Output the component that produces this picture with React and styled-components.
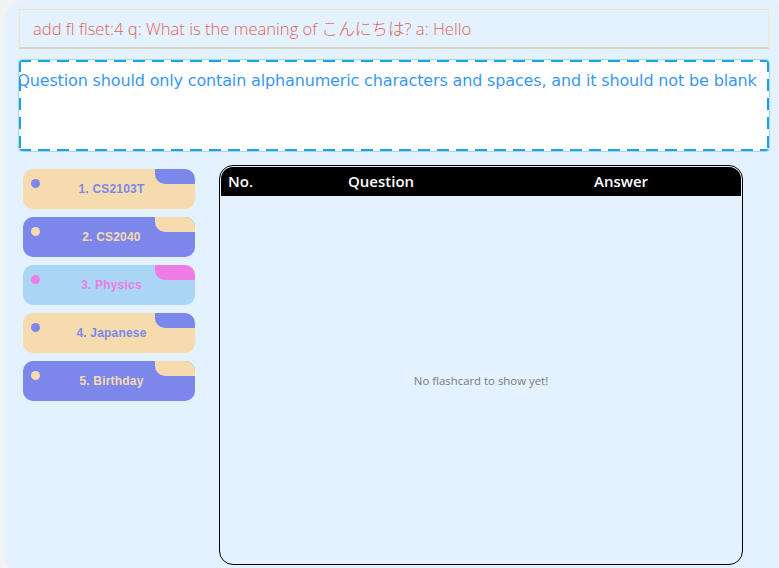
import React from 'react'
import styled, { createGlobalStyle } from 'styled-components'

const GlobalStyle = createGlobalStyle`
  html, body {
    margin: 0;
    padding: 0;
    background: #f2f2f2;
    overflow: hidden;
  }
`

const WHEAT = '#f6dbae'
const PURPLE = '#7c87ec'
const SKY = '#aad5f4'
const PINK = '#ee7be6'
const DASH = '#1ca4e0'

const sets = [
  { name: '1. CS2103T', bg: WHEAT, fg: PURPLE },
  { name: '2. CS2040', bg: PURPLE, fg: WHEAT },
  { name: '3. Physics', bg: SKY, fg: PINK },
  { name: '4. Japanese', bg: WHEAT, fg: PURPLE },
  { name: '5. Birthday', bg: PURPLE, fg: WHEAT },
]

const Page = styled.div`
  margin-left: 4px;
  width: 790px;
  height: 575px;
  box-sizing: border-box;
  background: #e4f1fe;
  border-radius: 22px;
  padding: 9px 0 0 15px;
`

const Inner = styled.div`
  width: 750px;
`

const CommandBox = styled.div`
  height: 40px;
  box-sizing: border-box;
  border: 1px solid #f7e3c4;
  border-bottom: 2px solid #d9d4cc;
  padding: 0 13px 2px;
  display: flex;
  align-items: center;
  font-family: 'Open Sans', 'Noto Sans CJK JP', sans-serif;
  font-size: 16.6px;
  font-weight: 300;
  color: #e0665a;
`

const ResultBox = styled.div`
  margin-top: 11px;
  height: 91px;
  box-sizing: border-box;
  border-radius: 3px;
  outline: 1px solid #a8d8ee;
  background-color: #fff;
  background-image:
    repeating-linear-gradient(90deg, ${DASH} 0 12px, transparent 12px 19px),
    repeating-linear-gradient(90deg, ${DASH} 0 12px, transparent 12px 19px),
    repeating-linear-gradient(180deg, ${DASH} 0 12px, transparent 12px 19px),
    repeating-linear-gradient(180deg, ${DASH} 0 12px, transparent 12px 19px);
  background-size: 100% 2px, 100% 2px, 2px 100%, 2px 100%;
  background-position: 0 0, 0 100%, 0 0, 100% 0;
  background-repeat: no-repeat;
  display: flex;
  justify-content: center;
  padding-top: 10px;
`

const ResultText = styled.div`
  white-space: nowrap;
  margin-right: 14px;
  font-family: 'DejaVu Sans', sans-serif;
  font-size: 16px;
  letter-spacing: -0.15px;
  color: #3a97f0;
  line-height: 22px;
`

const Main = styled.div`
  margin-top: 14px;
  display: flex;
  align-items: flex-start;
`

const SideBar = styled.div`
  margin-top: 4px;
  margin-left: 4px;
  width: 172px;
  display: flex;
  flex-direction: column;
  gap: 8px;
`

const SetCard = styled.div`
  position: relative;
  height: 40px;
  border-radius: 10px;
  background: ${p => p.$bg};
  color: ${p => p.$fg};
  display: flex;
  align-items: center;
  justify-content: center;
  font-family: 'Liberation Sans', Arial, sans-serif;
  font-weight: bold;
  font-size: 12px;
  letter-spacing: 0.2px;
  overflow: hidden;
  padding-left: 5px;
  box-sizing: border-box;
`

const Dot = styled.span`
  position: absolute;
  left: 8px;
  top: 10px;
  width: 9px;
  height: 9px;
  border-radius: 50%;
  background: ${p => p.$fg};
`

const Tab = styled.span`
  position: absolute;
  right: 0;
  top: 0;
  width: 40px;
  height: 15px;
  background: ${p => p.$fg};
  border-bottom-left-radius: 10px;
`

const Table = styled.div`
  margin-left: 24px;
  width: 524px;
  height: 400px;
  box-sizing: border-box;
  border: 1px solid #000;
  border-radius: 14px;
  padding: 1px;
  display: flex;
  flex-direction: column;
`

const HeaderRow = styled.div`
  height: 29px;
  background: #000;
  border-radius: 12px 12px 0 0;
  display: flex;
  align-items: center;
  padding-bottom: 2px;
  box-sizing: border-box;
  font-family: 'Open Sans', sans-serif;
  font-size: 15px;
  font-weight: 600;
  color: #fff;
`

const HeaderCell = styled.div`
  width: ${p => p.$w}px;
  padding-left: ${p => p.$pad || 0}px;
  box-sizing: border-box;
`

const Empty = styled.div`
  flex: 1;
  display: flex;
  align-items: center;
  justify-content: center;
  padding-top: 2px;
  font-family: 'Open Sans', sans-serif;
  font-size: 11.4px;
  color: #7a7a7a;
`

const App = () => {
  return (
    <>
      <GlobalStyle />
      <Page>
        <Inner>
          <CommandBox>add fl flset:4 q: What is the meaning of こんにちは? a: Hello</CommandBox>
          <ResultBox>
            <ResultText>Question should only contain alphanumeric characters and spaces, and it should not be blank</ResultText>
          </ResultBox>
          <Main>
            <SideBar>
              {sets.map((s, i) => (
                <SetCard key={i} $bg={s.bg} $fg={s.fg}>
                  <Dot $fg={s.fg} />
                  <Tab $fg={s.fg} />
                  {s.name}
                </SetCard>
              ))}
            </SideBar>
            <Table>
              <HeaderRow>
                <HeaderCell $w={127} $pad={7}>No.</HeaderCell>
                <HeaderCell $w={246}>Question</HeaderCell>
                <HeaderCell $w={140}>Answer</HeaderCell>
              </HeaderRow>
              <Empty>No flashcard to show yet!</Empty>
            </Table>
          </Main>
        </Inner>
      </Page>
    </>
  )
}

export default App
